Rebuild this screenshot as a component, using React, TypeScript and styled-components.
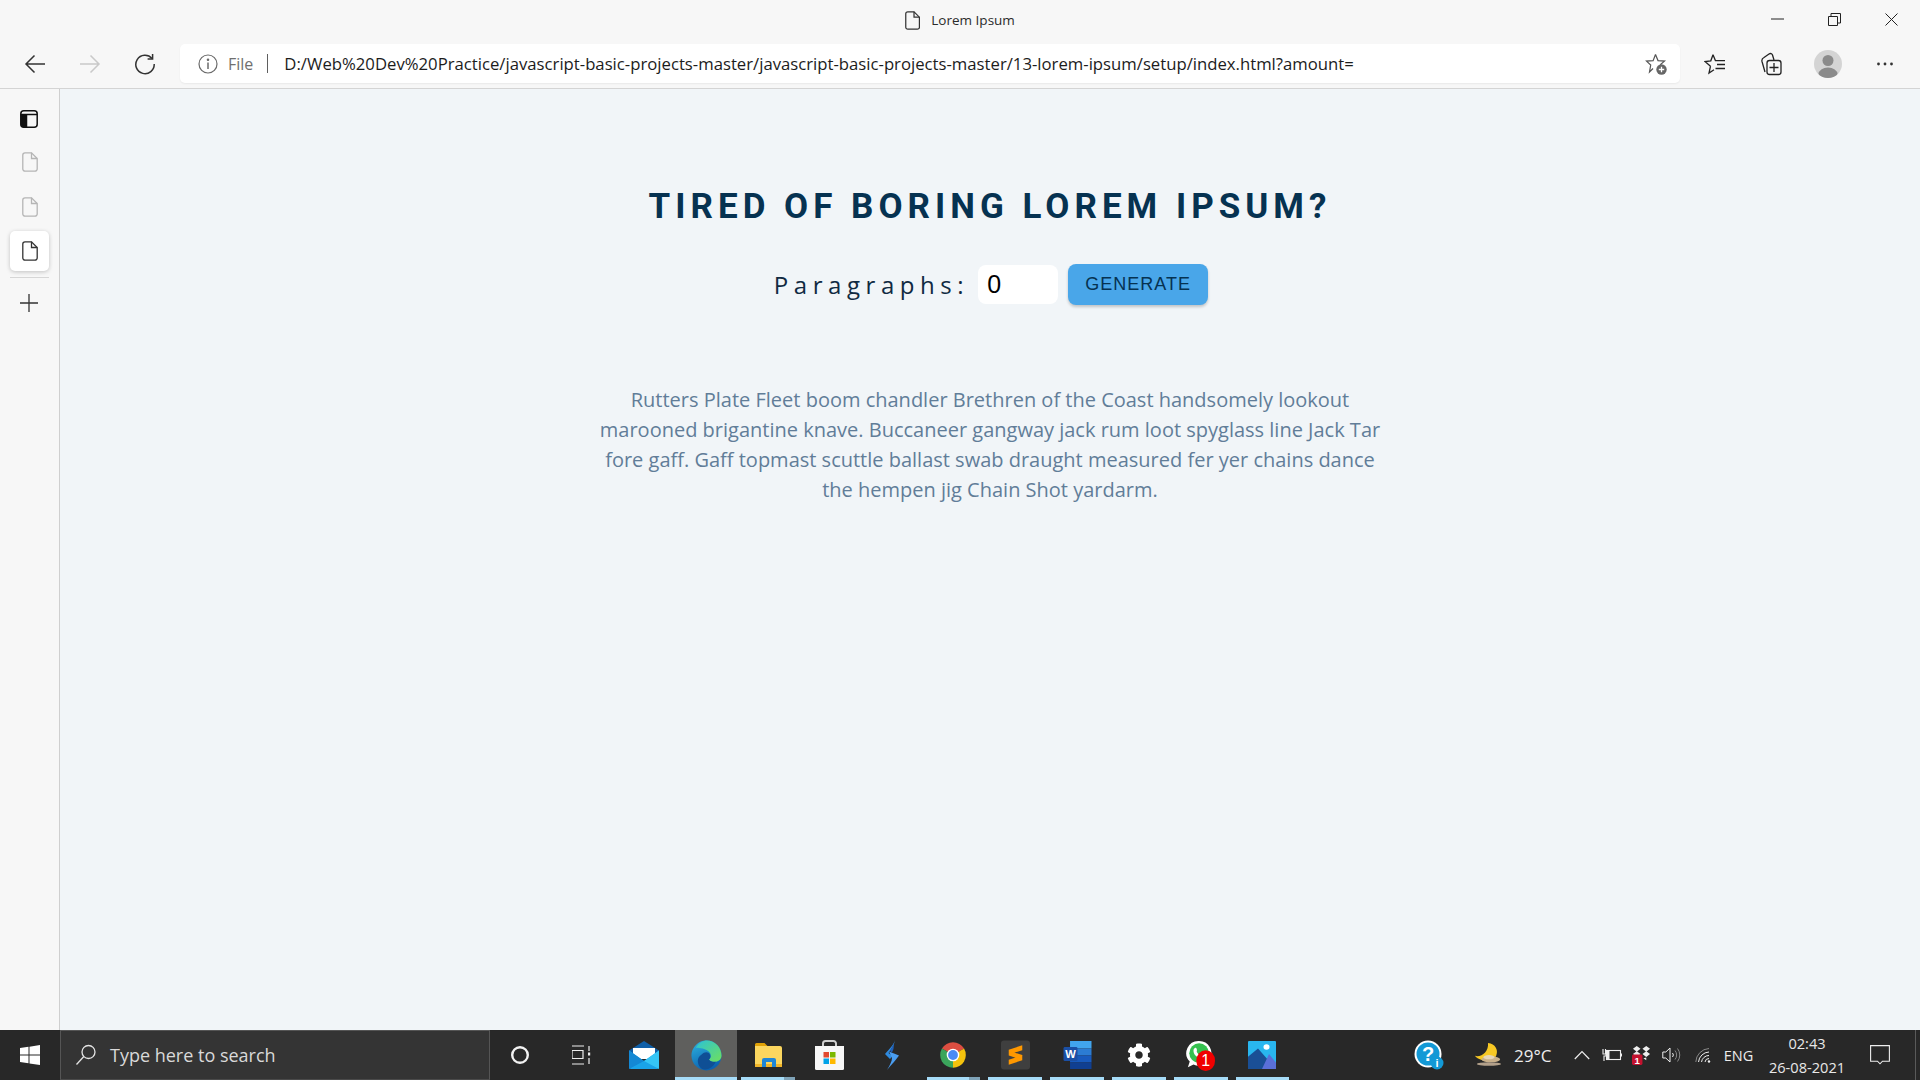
import React from "react";
import styled, { createGlobalStyle } from "styled-components";
import { FaCog } from "react-icons/fa";

const GlobalStyle = createGlobalStyle`
  html, body {
    margin: 0;
    padding: 0;
    height: 100%;
    overflow: hidden;
    background: #f7f7f7;
    font-family: "Open Sans", "Liberation Sans", sans-serif;
  }
  * { box-sizing: border-box; }
`;

const Screen = styled.div`
  width: 100vw;
  height: 100vh;
  display: flex;
  flex-direction: column;
`;

/* browser chrome */
const TitleBar = styled.div`
  height: 44px;
  flex-shrink: 0;
  display: flex;
  align-items: center;
  justify-content: space-between;
  background: #f7f7f7;
`;

const TitleSpacer = styled.div`
  width: 171px;
`;

const TabTitle = styled.div`
  display: flex;
  align-items: center;
  gap: 11px;
  padding-bottom: 4px;
  font-size: 13.5px;
  color: #2b2b2b;
`;

const WindowControls = styled.div`
  width: 171px;
  display: flex;
  align-self: flex-start;
`;

const WindowButton = styled.div`
  width: 57px;
  height: 38px;
  display: flex;
  align-items: center;
  justify-content: center;
`;

const Toolbar = styled.div`
  height: 45px;
  flex-shrink: 0;
  display: flex;
  align-items: flex-start;
  padding-left: 7px;
  background: #f7f7f7;
  border-bottom: 1px solid #d4d4d4;
`;

const NavButton = styled.div`
  width: 55px;
  height: 39px;
  display: flex;
  align-items: center;
  justify-content: center;
`;

const AddressBar = styled.div`
  flex: 1;
  height: 39px;
  margin-left: 8px;
  padding: 0 11px 0 18px;
  display: flex;
  align-items: center;
  background: #fff;
  border-radius: 5px;
  box-shadow: 0 1px 2px rgba(0, 0, 0, 0.06);
`;

const FileLabel = styled.span`
  margin-left: 10px;
  font-size: 16px;
  color: #6f6f6f;
`;

const Separator = styled.span`
  width: 1px;
  height: 19px;
  margin: 0 16px 0 14px;
  background: #5f5f5f;
`;

const Url = styled.span`
  flex: 1;
  font-size: 16.72px;
  color: #1c1c1c;
  white-space: nowrap;
`;

const ToolGroup = styled.div`
  width: 240px;
  padding-left: 7px;
  display: flex;
`;

const ToolButton = styled.div`
  width: 56.5px;
  height: 39px;
  display: flex;
  align-items: center;
  justify-content: center;
`;

const Avatar = styled.div`
  width: 28px;
  height: 28px;
  border-radius: 50%;
  overflow: hidden;
  background: #d4d4d4;
`;

/* vertical tabs + page */
const Body = styled.div`
  flex: 1;
  display: flex;
  min-height: 0;
`;

const SideTabs = styled.aside`
  width: 60px;
  flex-shrink: 0;
  display: flex;
  flex-direction: column;
  align-items: stretch;
  background: #f7f7f7;
  border-right: 1px solid #cfcfcf;
  padding: 9px 10px 0 10px;
`;

const SideTab = styled.div<{ $active?: boolean; $h: number; $nudge?: boolean }>`
  width: 39px;
  height: ${(p) => p.$h}px;
  margin-top: ${(p) => (p.$active ? "2px" : "0")};
  padding-right: ${(p) => (p.$nudge ? "2px" : "0")};
  display: flex;
  align-items: center;
  justify-content: center;
  border-radius: 5px;
  background: ${(p) => (p.$active ? "#fff" : "transparent")};
  box-shadow: ${(p) => (p.$active ? "0 1px 4px rgba(0,0,0,.22)" : "none")};
`;

const SideDivider = styled.div`
  width: 39px;
  height: 1px;
  margin-top: 6px;
  background: #d6d6d6;
`;

const Page = styled.main`
  flex: 1;
  background: #f1f5f8;
  display: flex;
  flex-direction: column;
  align-items: center;
  padding-top: 96px;
`;

const Heading = styled.h1`
  margin: 0;
  font-family: Roboto, "Liberation Sans", sans-serif;
  font-size: 35px;
  line-height: 44px;
  font-weight: 700;
  letter-spacing: 5px;
  color: #063251;
  text-transform: uppercase;
`;

const Form = styled.form`
  margin-top: 35px;
  margin-left: 2px;
  display: flex;
  align-items: center;
`;

const FormLabel = styled.label`
  font-size: 24px;
  letter-spacing: 5.55px;
  color: #102a42;
  text-transform: capitalize;
`;

const AmountInput = styled.div`
  width: 80px;
  height: 39px;
  margin-left: 9px;
  padding-left: 9px;
  display: flex;
  align-items: center;
  background: #fff;
  border-radius: 8px;
  font-family: "Liberation Sans", Arial, sans-serif;
  font-size: 25px;
  color: #000;
`;

const GenerateButton = styled.button`
  width: 140px;
  height: 41px;
  margin-left: 10px;
  padding: 0;
  border: none;
  border-radius: 8px;
  background: #49a6e9;
  color: #063251;
  font-family: "Liberation Sans", Arial, sans-serif;
  font-size: 18px;
  letter-spacing: 1px;
  text-transform: uppercase;
  box-shadow: 0 2px 3px rgba(0, 0, 0, 0.2);
`;

const Lorem = styled.p`
  margin: 80px 0 0;
  width: 800px;
  font-size: 20px;
  line-height: 30px;
  text-align: center;
  color: #617d98;
`;

/* windows taskbar */
const Taskbar = styled.footer`
  height: 50px;
  flex-shrink: 0;
  display: flex;
  background: #282828;
  color: #fff;
`;

const StartButton = styled.div`
  width: 60px;
  display: flex;
  align-items: center;
  justify-content: center;
`;

const SearchBox = styled.div`
  width: 430px;
  display: flex;
  align-items: center;
  gap: 13px;
  padding-left: 14px;
  background: #343434;
  border: 1px solid #555;
  border-bottom-color: #4a4a4a;
  font-size: 18px;
  color: #d9d9d9;
`;

const AppSlot = styled.div<{ $active?: boolean; $running?: boolean; $stacked?: boolean }>`
  position: relative;
  width: 61.8px;
  display: flex;
  align-items: center;
  justify-content: center;
  background: ${(p) => (p.$active ? "#5f5f5d" : "transparent")};

  &::after {
    content: "";
    display: ${(p) => (p.$running ? "block" : "none")};
    position: absolute;
    left: ${(p) => (p.$active ? "0" : "4px")};
    right: ${(p) => (p.$active ? "0" : "4px")};
    bottom: 0;
    height: 3px;
    background: ${(p) =>
      p.$stacked
        ? "linear-gradient(90deg, #a6dcf8 0 80%, #7fa3b8 80% 100%)"
        : "#a6dcf8"};
  }
`;

const Tray = styled.div`
  margin-left: auto;
  display: flex;
`;

const TraySlot = styled.div<{ $w: number }>`
  width: ${(p) => p.$w}px;
  display: flex;
  align-items: center;
  justify-content: center;
`;

const WeatherSlot = styled.div`
  width: 110px;
  padding-left: 17px;
  display: flex;
  align-items: center;
  gap: 12px;
  font-size: 17px;
  color: #ededed;
`;

const LangLabel = styled.span`
  font-size: 14.5px;
  color: #ededed;
`;

const Clock = styled.div`
  width: 96px;
  text-align: center;
  font-size: 14.6px;
  line-height: 24px;
  padding-top: 1px;
  color: #e8e8e8;
`;

const ShowDesktop = styled.div`
  width: 5px;
  margin-left: 10px;
  border-left: 1px solid #5a5a5a;
`;

/* icons */
const DocIcon = ({ color = "#333", size = 20 }: { color?: string; size?: number }) => (
  <svg width={size * 0.8} height={size} viewBox="0 0 16 20" fill="none" stroke={color} strokeWidth="1.3">
    <path d="M3 .8h6.5l5.7 5.7V17a2.2 2.2 0 0 1-2.2 2.2H3A2.2 2.2 0 0 1 .8 17V3A2.2 2.2 0 0 1 3 .8z" />
    <path d="M9.5.8v5.7h5.7" />
  </svg>
);

const BackIcon = ({ color = "#333" }: { color?: string }) => (
  <svg width="22" height="20" viewBox="0 0 22 20" fill="none" stroke={color} strokeWidth="1.5">
    <path d="M21 10H2M10.5 1.5 2 10l8.5 8.5" />
  </svg>
);

const ForwardIcon = () => (
  <svg width="22" height="20" viewBox="0 0 22 20" fill="none" stroke="#c9c9c9" strokeWidth="1.5">
    <path d="M1 10h19M11.5 1.5 20 10l-8.5 8.5" />
  </svg>
);

const ReloadIcon = () => (
  <svg width="22" height="22" viewBox="0 0 22 22" fill="none" stroke="#333" strokeWidth="1.5">
    <path d="M18 5.5A9.2 9.2 0 1 0 20.2 11" />
    <path d="M18.6 1v5h-5" />
  </svg>
);

const InfoIcon = () => (
  <svg width="20" height="20" viewBox="0 0 20 20" fill="none" stroke="#6a6a6a" strokeWidth="1.2">
    <circle cx="10" cy="10" r="9" />
    <path d="M10 8.5V15" strokeWidth="1.5" />
    <circle cx="10" cy="5.8" r=".7" fill="#6a6a6a" />
  </svg>
);

const StarPlusIcon = () => (
  <svg width="24" height="24" viewBox="0 0 24 24" fill="none">
    <path
      d="M10.5 2.5 13 8.6l6.5.5-4.3 3.6M8 16.5 4.5 20l1.2-7L1.5 9.1l6.6-.5 2.4-6.1"
      stroke="#555"
      strokeWidth="1.2"
    />
    <circle cx="16.5" cy="17.5" r="5.2" fill="#666" />
    <path d="M16.5 14.8v5.4M13.8 17.5h5.4" stroke="#fff" strokeWidth="1.3" />
  </svg>
);

const FavoritesIcon = () => (
  <svg width="22" height="22" viewBox="0 0 22 22" fill="none" stroke="#222" strokeWidth="1.3">
    <path d="M9 1.8 11.4 7.6h9.600M6.500 13.200 5 20l5-3.200M6.500 13.200 1 8.600l5.800-.8L9 1.800" />
    <path d="M13 11.500h8M11.500 15.500h9.500" />
  </svg>
);

const CollectionsIcon = () => (
  <svg width="22" height="24" viewBox="1 0 22 24" fill="none" stroke="#222" strokeWidth="1.3">
    <rect x="7" y="8.500" width="14" height="14" rx="2.500" />
    <path d="M14 11v9M9.500 15.500h9" />
    <path d="M5 20 2 9.500C1.500 7.500 2 6.500 4 5.500L9 2c1.500-1 3-.5 3.500 1l1.500 5" />
  </svg>
);

const AvatarArt = () => (
  <svg width="28" height="28" viewBox="0 0 28 28">
    <circle cx="14" cy="10.500" r="5.500" fill="#8b8b8b" />
    <ellipse cx="14" cy="24" rx="9.500" ry="6.500" fill="#8b8b8b" />
  </svg>
);

const MoreIcon = () => (
  <svg width="18" height="4" viewBox="0 0 18 4" fill="#333">
    <circle cx="2.500" cy="2" r="1.400" />
    <circle cx="9" cy="2" r="1.400" />
    <circle cx="15.500" cy="2" r="1.400" />
  </svg>
);

const PanelIcon = () => (
  <svg width="18" height="18" viewBox="0 0 18 18" fill="none" stroke="#111" strokeWidth="1.500">
    <rect x=".8" y=".8" width="16.400" height="16.400" rx="3" />
    <path d="M1 4.500h16" />
    <path d="M1.500 5h5v11.500h-3a2 2 0 0 1-2-2z" fill="#111" />
  </svg>
);

const PlusIcon = () => (
  <svg width="18" height="18" viewBox="0 0 18 18" stroke="#333" strokeWidth="1.300">
    <path d="M9 0v18M0 9h18" />
  </svg>
);

const WindowsLogo = () => (
  <svg width="20" height="20" viewBox="0 0 20 20" fill="#fff">
    <path d="M0 3 8.500 1.800v7.600H0zM9.500 1.700 20 0v9.400H9.500zM0 10.400h8.500v7.800L0 17zM9.500 10.400H20V20L9.500 18.400z" />
  </svg>
);

const SearchIcon = () => (
  <svg width="22" height="22" viewBox="0 0 22 22" fill="none" stroke="#e4e4e4" strokeWidth="1.300">
    <circle cx="13.500" cy="8" r="6.500" />
    <path d="M8.800 12.500 1.500 20.500" />
  </svg>
);

const CortanaIcon = () => (
  <svg width="20" height="20" viewBox="1 0 20 20" fill="none" stroke="#f2f2f2" strokeWidth="2.400">
    <circle cx="10" cy="10" r="7.800" />
  </svg>
);

const TaskViewIcon = () => (
  <svg width="22" height="20" viewBox="2 0 22 20" fill="none" stroke="#eee" strokeWidth="1.200">
    <path d="M1 1h13M1 19h13M2 5.500h11v8H2zM19 1v5M19 13v6" />
    <rect x="18" y="7.500" width="2.200" height="3" fill="#eee" stroke="none" />
  </svg>
);

const MailIcon = () => (
  <svg width="30" height="28" viewBox="0 0 30 28">
    <path d="M15 0 30 9.500V16H0V9.500z" fill="#0f5fa8" />
    <path d="M4 7h22v11H4z" fill="#fff" />
    <path d="M0 9.500 15 20 30 9.500V26a2 2 0 0 1-2 2H2a2 2 0 0 1-2-2z" fill="#1aa3e8" />
    <path d="M30 9.500 15 20l15 8z" fill="#35c5f5" />
    <path d="M0 28 15 20 0 9.500z" fill="#1488d4" />
  </svg>
);

const EdgeIcon = () => (
  <svg width="31" height="31" viewBox="0 0 32 32">
    <defs>
      <linearGradient id="edgeOuter" x1="0" y1="0" x2="0.4" y2="1">
        <stop offset="0" stopColor="#2fb5e0" />
        <stop offset="1" stopColor="#0b62b0" />
      </linearGradient>
      <linearGradient id="edgeGreen" x1="0" y1="0" x2="1" y2="1">
        <stop offset="0" stopColor="#2cc3d5" />
        <stop offset="1" stopColor="#6fe05c" />
      </linearGradient>
    </defs>
    <circle cx="16" cy="16" r="15.500" fill="url(#edgeOuter)" />
    <path
      d="M5 8C8 2.500 13 .5 16 .5 25 .5 31.500 8 31.500 16c0 4-3 6.500-7 6.500-3 0-5.500-1-6-2.500 3-2 2.500-6-.5-8.500C13 8 7 8 5 8z"
      fill="url(#edgeGreen)"
    />
    <path
      d="M11 15c3-3 7-3 8.500 0 1 2.500 0 4.500-1 5 1 2 4 3 7 2.500-2 5-7 8-11 8-5 0-7.500-5-7.500-9 0-2.500 1.500-5 4-6.500z"
      fill="#0f4f95"
    />
  </svg>
);

const FolderIcon = () => (
  <svg width="27" height="24" viewBox="0 0 27 24">
    <path d="M0 1.500A1.500 1.500 0 0 1 1.500 0h8L13 3.500H0z" fill="#e0a106" />
    <path d="M0 3h25a2 2 0 0 1 2 2v17a2 2 0 0 1-2 2H2a2 2 0 0 1-2-2z" fill="#fbd65f" />
    <rect x="0" y="21" width="27" height="3" fill="#f0b429" />
    <path d="M7 24v-7a2 2 0 0 1 2-2h10a2 2 0 0 1 2 2v7h-4v-5h-6v5z" fill="#1f86d6" />
  </svg>
);

const StoreIcon = () => (
  <svg width="29" height="30" viewBox="0 0 29 30">
    <path d="M8 7V3.500A2.500 2.500 0 0 1 10.500 1h8A2.500 2.500 0 0 1 21 3.500V7" fill="none" stroke="#cfcfcf" strokeWidth="2" />
    <path d="M0 6h29v22.500a1.500 1.500 0 0 1-1.500 1.500h-26A1.500 1.500 0 0 1 0 28.500z" fill="#f7f7f7" />
    <rect x="8.500" y="12" width="5.500" height="5.500" fill="#e2492f" />
    <rect x="15" y="12" width="5.500" height="5.500" fill="#7ab800" />
    <rect x="8.500" y="18.500" width="5.500" height="5.500" fill="#00a2e8" />
    <rect x="15" y="18.500" width="5.500" height="5.500" fill="#ffb900" />
  </svg>
);

const KiteIcon = () => (
  <svg width="15" height="30" viewBox="0 0 15 30">
    <path d="M11 0 C10 5 5 9 1 14 L6 19 L8.500 16 L4.500 13 C7 9 10 6 11 0z" fill="#2f8be0" />
    <path d="M5 11.500 15 15.500 C12 20 8 24 3 30 C6 25 8 21 8 18z" fill="#4a9df0" />
    <path d="M6 11 10 3 9.500 9 8 12.500z" fill="#1f5fb8" />
  </svg>
);

const ChromeIcon = () => (
  <svg width="28" height="28" viewBox="0 0 24 24">
    <path d="M12 12 2.500 6.500A11 11 0 0 1 21.500 6.500z" fill="#dc4e41" />
    <path d="M12 12 21.500 6.500A11 11 0 0 1 12 23z" fill="#f4c20d" />
    <path d="M12 12 12 23A11 11 0 0 1 2.500 6.500z" fill="#3ba55c" />
    <circle cx="12" cy="12" r="5.400" fill="#fff" />
    <circle cx="12" cy="12" r="4.200" fill="#4a8af4" />
  </svg>
);

const SublimeIcon = () => (
  <svg width="29" height="30" viewBox="0 0 30 30">
    <rect width="30" height="30" rx="3" fill="#3f3f3f" />
    <path d="M22 5v5L8 14.500v-5zM8 10.500 22 15v5L8 15.500zM22 15.500v5L8 25v-5z" fill="#ff9800" />
  </svg>
);

const WordIcon = () => (
  <svg width="29" height="28" viewBox="0 0 30 30">
    <rect x="7" y="0" width="23" height="8" fill="#41a5ee" />
    <rect x="7" y="8" width="23" height="7.500" fill="#2b7cd3" />
    <rect x="7" y="15.500" width="23" height="7.500" fill="#185abd" />
    <rect x="7" y="23" width="23" height="7" fill="#103f91" />
    <rect x="0" y="6.500" width="15" height="15" rx="1.500" fill="#1a4fa5" />
    <text x="7.500" y="18.500" textAnchor="middle" fontFamily="Liberation Sans, sans-serif" fontSize="12" fontWeight="700" fill="#fff">
      W
    </text>
  </svg>
);

const WhatsAppIcon = () => (
  <svg width="30" height="32" viewBox="0 0 32 34">
    <path d="M14 2a13 13 0 0 1 11 20 13 13 0 0 1-17 5L2 30l2-6A13 13 0 0 1 14 2z" fill="#fff" />
    <circle cx="14" cy="15" r="10.500" fill="#35c14f" />
    <path d="M9.500 9.500c2-1.500 2.500 2.500 2 3.500-.5 1 3 5 4.500 4 1.500-1 4 1 3.500 2-2 4-12 0-11.500-7 0-1 .5-2 1.500-2.500z" fill="#fff" />
    <ellipse cx="21" cy="23" rx="10" ry="11" fill="#f00000" />
    <text x="21" y="29" textAnchor="middle" fontFamily="Liberation Sans, sans-serif" fontSize="17" fill="#fff">
      1
    </text>
  </svg>
);

const PhotosIcon = () => (
  <svg width="28" height="28" viewBox="0 0 28 30" preserveAspectRatio="none">
    <rect width="28" height="30" rx="1" fill="#29b6ef" />
    <circle cx="18.500" cy="6.500" r="3" fill="#fff" />
    <path d="M0 30V17L10 8l9 11 9 7v4z" fill="#1a4f96" />
    <path d="M14 30 21 14l7 9v7z" fill="#5a6fd8" />
  </svg>
);

const HelpIcon = () => (
  <svg width="30" height="30" viewBox="0 0 30 30">
    <circle cx="14" cy="14" r="13.500" fill="#fff" />
    <circle cx="14" cy="14" r="11.500" fill="#1399d6" />
    <text x="14" y="21" textAnchor="middle" fontFamily="Liberation Sans, sans-serif" fontSize="20" fontWeight="700" fill="#fff">
      ?
    </text>
    <circle cx="23" cy="23" r="6.500" fill="#1399d6" />
    <text x="23" y="27" textAnchor="middle" fontFamily="Liberation Sans, sans-serif" fontSize="11" fontWeight="700" fill="#fff">
      i
    </text>
  </svg>
);

const MoonIcon = () => (
  <svg width="28" height="24" viewBox="0 0 30 28" preserveAspectRatio="none">
    <path d="M15 0c8 1 11 8 9 14-1 5-8 8-15 6C5 19 2 17 1 15c7 2 15-5 14-15z" fill="#f7c824" />
    <ellipse cx="18" cy="19" rx="10" ry="3.500" fill="#c9b08a" />
    <ellipse cx="16" cy="24.500" rx="13" ry="2" fill="#b3a08a" />
    <ellipse cx="16" cy="16.500" rx="6" ry="2.500" fill="#e7d6b8" />
  </svg>
);

const ChevronIcon = () => (
  <svg width="16" height="10" viewBox="0 0 16 10" fill="none" stroke="#eee" strokeWidth="1.200">
    <path d="M.8 9 8 1.500 15.200 9" />
  </svg>
);

const BatteryIcon = () => (
  <svg width="20" height="14" viewBox="0 0 20 14" fill="none" stroke="#eee" strokeWidth="1.100">
    <rect x="4.500" y="2.500" width="14" height="9" />
    <path d="M1 1v5M3.500 1v5M.5 6h3.500v2H2v5" />
    <rect x="19" y="5.500" width="1" height="3" fill="#eee" stroke="none" />
    <rect x="4.500" y="2.500" width="3" height="9" fill="#eee" stroke="none" />
  </svg>
);

const DropboxIcon = () => (
  <svg width="19" height="19" viewBox="0 0 20 20">
    <path d="M5 0 9 3 5 6 1 3zM15 0l4 3-4 3-4-3zM5 5.500 9 8.500 5 11.500 1 8.500zM15 5.500l4 3-4 3-4-3zM12 13l3-1v3z" fill="#eee" />
    <rect x="0" y="9" width="11" height="11" rx="1.500" fill="#c4122f" />
    <text x="5.500" y="18.500" textAnchor="middle" fontFamily="Liberation Sans, sans-serif" fontSize="10" fontWeight="700" fill="#fff">
      1
    </text>
  </svg>
);

const SpeakerIcon = () => (
  <svg width="20" height="16" viewBox="0 0 20 16" fill="none" stroke="#eee" strokeWidth="1">
    <path d="M.8 5h3L8 1v14l-4.200-4h-3z" />
    <path d="M10.500 6a3 3 0 0 1 0 4" />
    <path d="M13 3.500a7 7 0 0 1 0 9M15.500 1.500a10.500 10.500 0 0 1 0 13" stroke="#888" />
  </svg>
);

const WifiIcon = () => (
  <svg width="16" height="16" viewBox="0 0 16 16" fill="none" stroke="#eee" strokeWidth="1">
    <path d="M.8 15A14 14 0 0 1 14 1.500" stroke="#888" />
    <path d="M3.500 15A11 11 0 0 1 14 5" />
    <path d="M6.500 15A7.500 7.500 0 0 1 14 8.500M10 15a4 4 0 0 1 4-3.500" />
    <circle cx="14" cy="14.500" r="1.200" fill="#eee" stroke="none" />
  </svg>
);

const NotifyIcon = () => (
  <svg width="20" height="20" viewBox="0 0 20 20" fill="none" stroke="#eee" strokeWidth="1.100">
    <path d="M.6.600h18.800v15.600H12.500L10 18.800l-2.500-2.600H.6z" />
  </svg>
);

const taskbarApps = [
  { id: "mail", icon: <MailIcon /> },
  { id: "edge", icon: <EdgeIcon />, active: true, running: true },
  { id: "files", icon: <FolderIcon />, running: true, stacked: true },
  { id: "store", icon: <StoreIcon /> },
  { id: "kite", icon: <KiteIcon /> },
  { id: "chrome", icon: <ChromeIcon />, running: true, stacked: true },
  { id: "sublime", icon: <SublimeIcon />, running: true },
  { id: "word", icon: <WordIcon />, running: true },
  { id: "settings", icon: <FaCog size={24} color="#fff" />, running: true },
  { id: "whatsapp", icon: <WhatsAppIcon />, running: true },
  { id: "photos", icon: <PhotosIcon />, running: true },
];

const URL_TEXT =
  "D:/Web%20Dev%20Practice/javascript-basic-projects-master/javascript-basic-projects-master/13-lorem-ipsum/setup/index.html?amount=";

export default function App() {
  return (
    <Screen>
      <GlobalStyle />
      <TitleBar>
        <TitleSpacer />
        <TabTitle>
          <DocIcon size={19} />
          Lorem Ipsum
        </TabTitle>
        <WindowControls>
          <WindowButton>
            <svg width="13" height="2" viewBox="0 0 13 2" stroke="#222"><path d="M0 1h13" /></svg>
          </WindowButton>
          <WindowButton>
            <svg width="13" height="13" viewBox="0 0 13 13" fill="none" stroke="#222">
              <path d="M.5 3.500h9v9h-9zM3 3.500v-3h9.500V10h-3" />
            </svg>
          </WindowButton>
          <WindowButton>
            <svg width="13" height="13" viewBox="0 0 13 13" stroke="#222"><path d="M.5.500l12 12M12.500.500l-12 12" /></svg>
          </WindowButton>
        </WindowControls>
      </TitleBar>

      <Toolbar>
        <NavButton><BackIcon /></NavButton>
        <NavButton><ForwardIcon /></NavButton>
        <NavButton><ReloadIcon /></NavButton>
        <AddressBar>
          <InfoIcon />
          <FileLabel>File</FileLabel>
          <Separator />
          <Url>{URL_TEXT}</Url>
          <StarPlusIcon />
        </AddressBar>
        <ToolGroup>
          <ToolButton><FavoritesIcon /></ToolButton>
          <ToolButton><CollectionsIcon /></ToolButton>
          <ToolButton><Avatar><AvatarArt /></Avatar></ToolButton>
          <ToolButton><MoreIcon /></ToolButton>
        </ToolGroup>
      </Toolbar>

      <Body>
        <SideTabs>
          <SideTab $h={42} $nudge><PanelIcon /></SideTab>
          <SideTab $h={44}><DocIcon color="#b5b5b5" size={20} /></SideTab>
          <SideTab $h={45}><DocIcon color="#b5b5b5" size={20} /></SideTab>
          <SideTab $h={40} $active><DocIcon color="#333" size={20} /></SideTab>
          <SideDivider />
          <SideTab $h={49} $nudge><PlusIcon /></SideTab>
        </SideTabs>
        <Page>
          <Heading>Tired of boring lorem ipsum?</Heading>
          <Form>
            <FormLabel>Paragraphs:</FormLabel>
            <AmountInput>0</AmountInput>
            <GenerateButton type="button">Generate</GenerateButton>
          </Form>
          <Lorem>
            Rutters Plate Fleet boom chandler Brethren of the Coast handsomely lookout marooned
            brigantine knave. Buccaneer gangway jack rum loot spyglass line Jack Tar fore gaff. Gaff
            topmast scuttle ballast swab draught measured fer yer chains dance the hempen jig Chain
            Shot yardarm.
          </Lorem>
        </Page>
      </Body>

      <Taskbar>
        <StartButton><WindowsLogo /></StartButton>
        <SearchBox>
          <SearchIcon />
          Type here to search
        </SearchBox>
        <AppSlot><CortanaIcon /></AppSlot>
        <AppSlot><TaskViewIcon /></AppSlot>
        {taskbarApps.map((app) => (
          <AppSlot key={app.id} $active={app.active} $running={app.running} $stacked={app.stacked}>
            {app.icon}
          </AppSlot>
        ))}
        <Tray>
          <TraySlot $w={57}><HelpIcon /></TraySlot>
          <WeatherSlot>
            <MoonIcon />
            29°C
          </WeatherSlot>
          <TraySlot $w={30}><ChevronIcon /></TraySlot>
          <TraySlot $w={30}><BatteryIcon /></TraySlot>
          <TraySlot $w={29}><DropboxIcon /></TraySlot>
          <TraySlot $w={31}><SpeakerIcon /></TraySlot>
          <TraySlot $w={31}><WifiIcon /></TraySlot>
          <TraySlot $w={41}><LangLabel>ENG</LangLabel></TraySlot>
          <Clock>
            02:43
            <br />
            26-08-2021
          </Clock>
          <TraySlot $w={50}><NotifyIcon /></TraySlot>
          <ShowDesktop />
        </Tray>
      </Taskbar>
    </Screen>
  );
}
